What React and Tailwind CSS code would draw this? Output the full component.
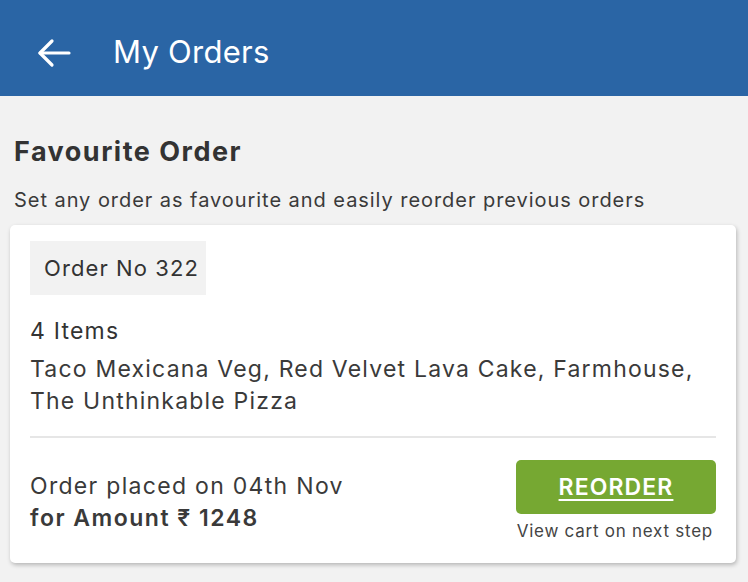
export default function App() {
  return (
    <div className="w-[748px] h-[582px] bg-[#f2f2f2] overflow-hidden text-[#333333]" style={{ fontFamily: 'Inter, "Noto Sans", sans-serif' }}>
      <header className="h-[96px] bg-[#2a65a5] flex items-center pt-[9px]">
        <div className="w-[113px] flex items-center pl-[37px]">
          <svg width="34" height="30" viewBox="0 0 34 30" fill="none" stroke="white" strokeWidth="3.2" strokeLinecap="round" strokeLinejoin="round">
            <path d="M32 15H3" />
            <path d="M15 3L3 15l12 12" />
          </svg>
        </div>
        <h1 className="text-white text-[31px] font-normal tracking-[0.25px]">My Orders</h1>
      </header>
      <main className="pl-[10px] pr-[12px]">
        <h2 className="pl-[4px] pt-[39px] text-[27px] font-bold leading-[34px] tracking-[1.5px] text-[#333333]">Favourite Order</h2>
        <p className="pl-[4px] mt-[18px] text-[20px] leading-[26px] tracking-[0.95px] text-[#3a3a3a]">Set any order as favourite and easily reorder previous orders</p>
        <div className="mt-[12px] bg-white rounded-[5px] shadow-[1px_2px_4px_rgba(0,0,0,0.25)] px-[20px] pt-[16px] pb-[19px]">
          <div className="inline-flex items-center h-[54px] pl-[14px] pr-[7px] bg-[#f2f2f2] text-[22px] tracking-[1.1px] text-[#333333]">Order No 322</div>
          <div className="mt-[20px] text-[23px] leading-[32px] tracking-[1.2px]">4 Items</div>
          <div className="mt-[6px] text-[23px] leading-[32px] tracking-[1.2px] text-[#3a3a3a]">
            Taco Mexicana Veg, Red Velvet Lava Cake, Farmhouse,<br />The Unthinkable Pizza
          </div>
          <div className="mt-[19px] h-[2px] bg-[#e6e6e6]" />
          <div className="mt-[22px] flex justify-between items-start">
            <div className="pt-[10px] text-[23px] leading-[32px] tracking-[1.3px] text-[#3a3a3a]">
              <div>Order placed on 04th Nov</div>
              <div className="font-semibold tracking-[1.5px]">for Amount ₹ 1248</div>
            </div>
            <div className="flex flex-col items-end">
              <button className="w-[200px] h-[54px] rounded-[5px] bg-[#76a832] text-white text-[23px] font-semibold underline underline-offset-[4px] tracking-[1.1px]">REORDER</button>
              <div className="mt-[4px] pr-[3px] text-[17px] leading-[26px] tracking-[0.75px] text-[#444444]">View cart on next step</div>
            </div>
          </div>
        </div>
      </main>
    </div>
  );
}
